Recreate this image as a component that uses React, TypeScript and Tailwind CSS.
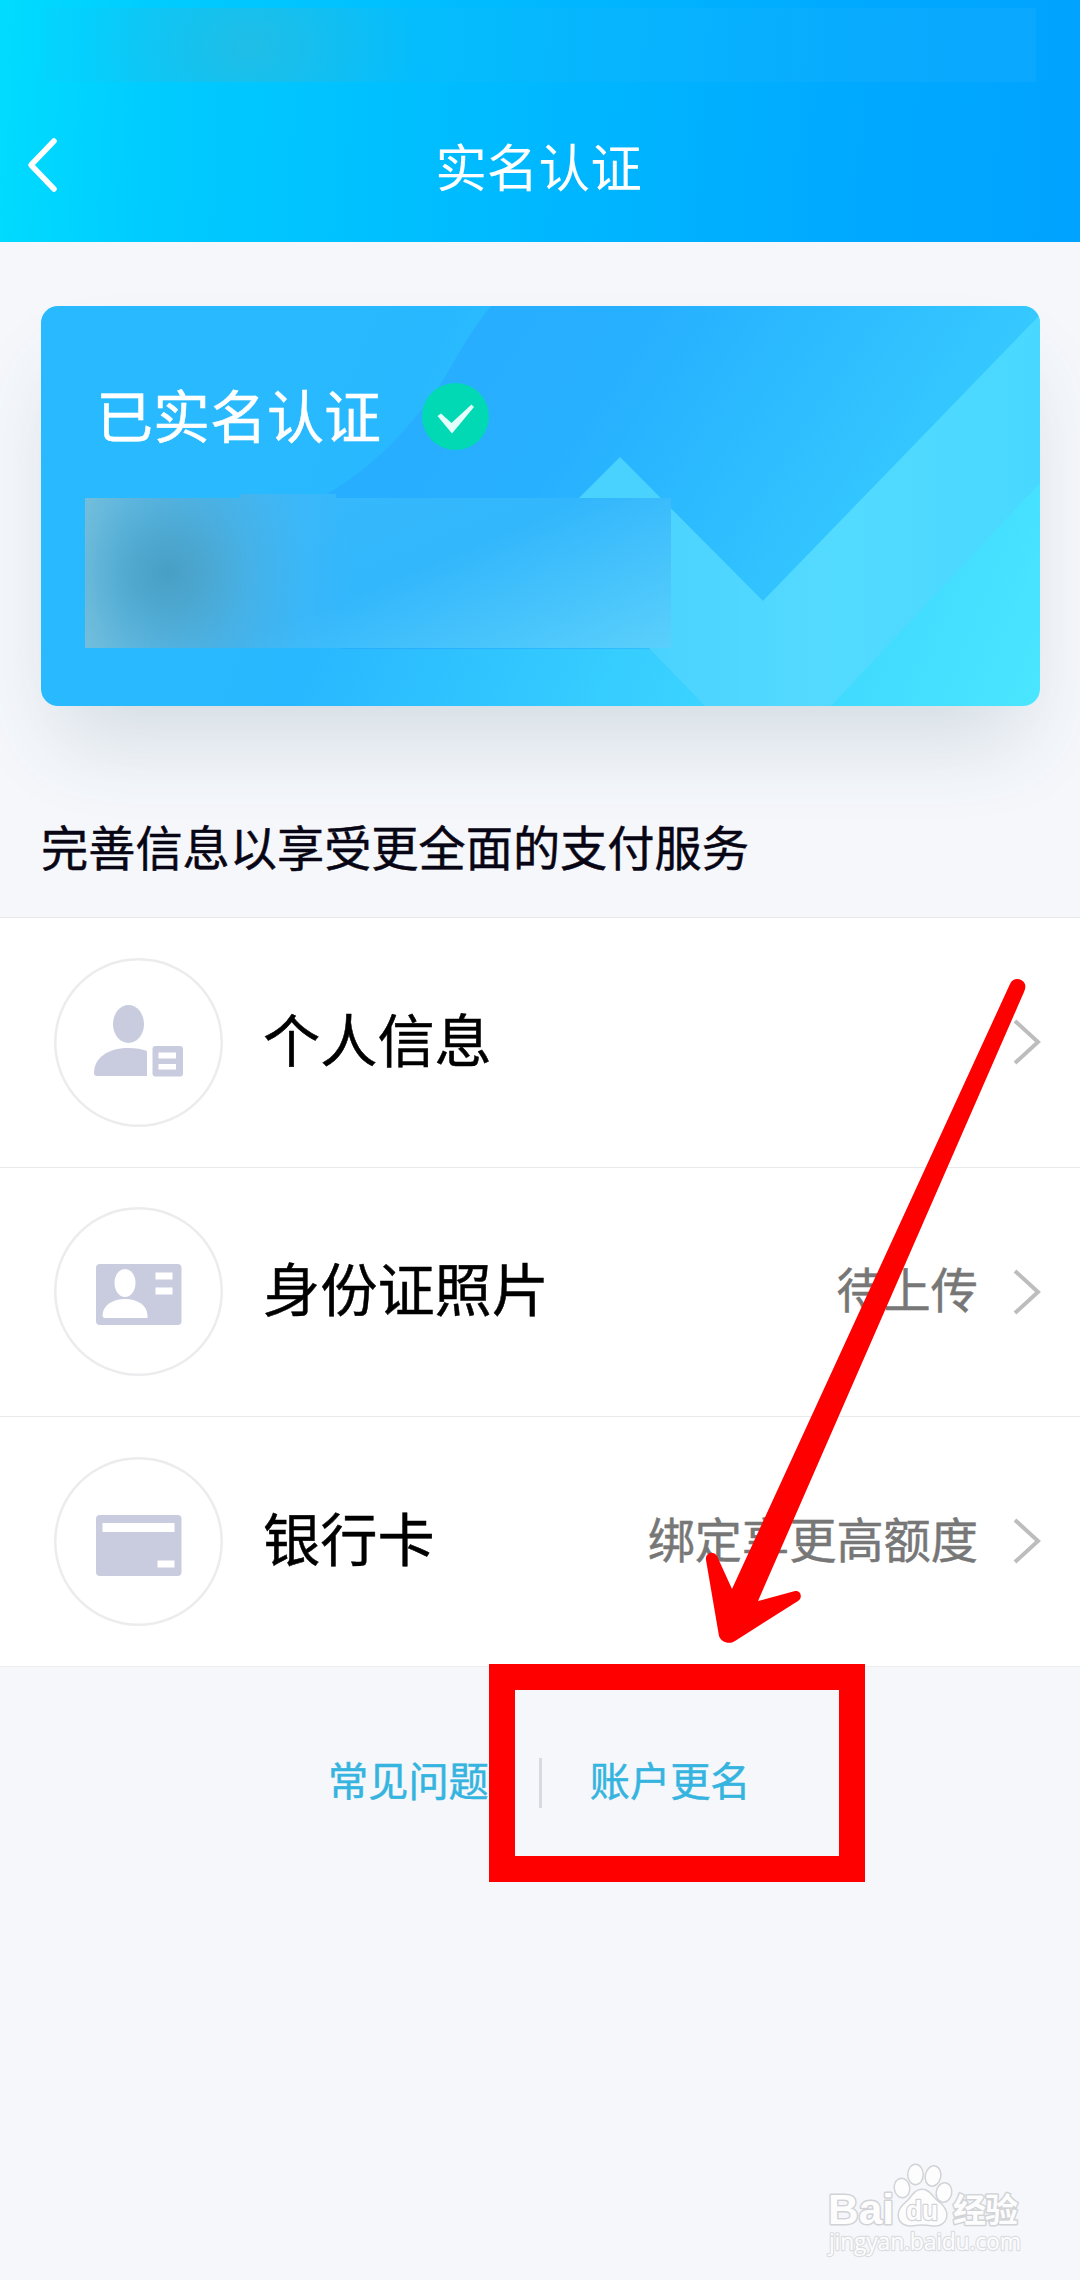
import type { ReactNode } from "react";

type RowItem = {
    label: string;
    hint?: string;
    icon: ReactNode;
};

function PersonIcon() {
    return (
        <svg viewBox="0 0 169 169" className="w-full h-full">
            <ellipse cx="74.5" cy="66" rx="15.5" ry="19" fill="#c9cbde" />
            <path
                d="M40 115 C40 100 54 90 74 90 C82 90 88 91 93 93 V118 H43 Q40 118 40 115Z"
                fill="#c9cbde"
            />
            <rect x="98.5" y="88" width="30.5" height="30.5" rx="3" fill="#c9cbde" />
            <rect x="104.5" y="94.5" width="17.5" height="6" fill="#fff" />
            <rect x="104.5" y="106" width="17.5" height="5.5" fill="#fff" />
        </svg>
    );
}

function IdCardIcon() {
    return (
        <svg viewBox="0 0 169 169" className="w-full h-full">
            <rect x="42" y="57" width="85.5" height="61" rx="4" fill="#c9cbde" />
            <ellipse cx="71" cy="76" rx="10.5" ry="14" fill="#fff" />
            <path
                d="M48.5 108 C49 98 59 92 71 92 C83 92 93 98 93.5 108 V111 H51 Q48.5 111 48.5 108Z"
                fill="#fff"
            />
            <rect x="101.5" y="65.5" width="17" height="7" fill="#fff" />
            <rect x="101.5" y="80.5" width="17" height="7" fill="#fff" />
        </svg>
    );
}

function BankCardIcon() {
    return (
        <svg viewBox="0 0 169 169" className="w-full h-full">
            <rect x="42" y="58" width="85.5" height="61" rx="4" fill="#c9cbde" />
            <rect x="48.5" y="66" width="72" height="9" fill="#fff" />
            <rect x="103.5" y="103.5" width="17" height="7" fill="#fff" />
        </svg>
    );
}

const rows: RowItem[] = [
    { label: "个人信息", icon: <PersonIcon /> },
    { label: "身份证照片", hint: "待上传", icon: <IdCardIcon /> },
    { label: "银行卡", hint: "绑定享更高额度", icon: <BankCardIcon /> },
];

function Header() {
    return (
        <header className="relative h-[242px] pt-[90px] bg-[linear-gradient(93deg,#00dcff_0%,#00ccff_14%,#00b8ff_50%,#00a9ff_80%,#00a3ff_100%)]">
            {/* smudged status bar */}
            <div className="absolute left-[45px] top-[8px] w-[991px] h-[74px] bg-[radial-gradient(ellipse_170px_130px_at_205px_38px,rgba(50,185,215,0.6),transparent),linear-gradient(90deg,rgba(40,190,240,0.1)_0%,rgba(20,185,245,0.2)_30%,rgba(40,175,255,0.25)_100%)]" />

            <div className="relative h-[152px] flex items-center justify-center">
                <svg viewBox="0 0 40 60" className="absolute left-[23px] top-[45px] w-[40px] h-[60px]">
                    <path
                        d="M31 6 L8 30 L31 54"
                        fill="none"
                        stroke="#fff"
                        strokeWidth="5.5"
                        strokeLinecap="round"
                        strokeLinejoin="round"
                    />
                </svg>
                <h1 className="pt-[8px] pr-[3px] text-[51.7px] leading-none text-white">实名认证</h1>
            </div>
        </header>
    );
}

function StatusCard() {
    return (
        <section className="relative mx-auto w-[999px] h-[400px] rounded-[17px] shadow-[0_50px_80px_-20px_rgba(60,100,120,0.19)]">
            <svg
                viewBox="0 0 999 400"
                className="absolute inset-0 w-full h-full rounded-[17px]"
                preserveAspectRatio="none"
            >
                <defs>
                    <linearGradient id="base" x1="240" y1="100" x2="999" y2="400" gradientUnits="userSpaceOnUse">
                        <stop offset="0" stopColor="#28b9ff" />
                        <stop offset="0.15" stopColor="#28b8ff" />
                        <stop offset="0.5" stopColor="#36cdff" />
                        <stop offset="1" stopColor="#4ae6ff" />
                    </linearGradient>
                    <linearGradient id="swoosh" x1="430" y1="80" x2="800" y2="330" gradientUnits="userSpaceOnUse">
                        <stop offset="0" stopColor="#28aeff" />
                        <stop offset="0.25" stopColor="#27b0ff" />
                        <stop offset="0.6" stopColor="#2dbcff" />
                        <stop offset="1" stopColor="#36caff" />
                    </linearGradient>
                    <linearGradient id="band" x1="600" y1="0" x2="999" y2="0" gradientUnits="userSpaceOnUse">
                        <stop offset="0" stopColor="#4ad2ff" />
                        <stop offset="0.45" stopColor="#54daff" />
                        <stop offset="1" stopColor="#48d8ff" />
                    </linearGradient>
                    <linearGradient id="blur" x1="290" y1="200" x2="390" y2="440" gradientUnits="userSpaceOnUse">
                        <stop offset="0" stopColor="#35b8fc" />
                        <stop offset="0.35" stopColor="#33b7fc" />
                        <stop offset="1" stopColor="#5acffb" />
                    </linearGradient>
                    <linearGradient id="edge" x1="44" y1="0" x2="310" y2="0" gradientUnits="userSpaceOnUse">
                        <stop offset="0" stopColor="#7cc2dc" />
                        <stop offset="0.5" stopColor="#52b4e4" stopOpacity="0.7" />
                        <stop offset="1" stopColor="#48b8f6" stopOpacity="0" />
                    </linearGradient>
                    <radialGradient id="smudge" cx="127" cy="267" r="145" gradientUnits="userSpaceOnUse">
                        <stop offset="0" stopColor="#489fc5" />
                        <stop offset="0.25" stopColor="#4aa3ca" stopOpacity="0.8" />
                        <stop offset="0.6" stopColor="#4aa8d4" stopOpacity="0.3" />
                        <stop offset="1" stopColor="#4aacdc" stopOpacity="0" />
                    </radialGradient>
                </defs>
                <rect width="999" height="400" fill="url(#base)" />
                <path
                    d="M450 0 C425 30 415 55 395 85 C362 128 335 160 279 192 L300 343 L610 343 L722 295 L999 9 V0Z"
                    fill="url(#swoosh)"
                />
                <path d="M579 151 L722 295 L999 9 V177 L790 400 H664 L500 230Z" fill="url(#band)" />
                {/* blurred name and id number */}
                <path d="M44 192 H199 V188 H295 V192 H630 V342 H44Z" fill="url(#blur)" />
                <path d="M44 192 H199 V188 H295 V192 H310 V342 H44Z" fill="url(#edge)" />
                <path d="M44 192 H199 V188 H295 V342 H44Z" fill="url(#smudge)" />
            </svg>

            <div className="relative flex items-center gap-[41px] pl-[55px] pt-[77px]">
                <h2 className="pt-[3px] text-[57px] leading-[64px] text-white">已实名认证</h2>
                <svg viewBox="0 0 67 67" className="w-[67px] h-[67px]">
                    <circle cx="33.5" cy="33.5" r="33.5" fill="#00d9b4" />
                    <path
                        d="M15.5 33 L19 30.5 L29.5 40 L49.5 21.5 L52 24 L30 50.5Z"
                        fill="#e4fffb"
                    />
                </svg>
            </div>
        </section>
    );
}

function Row({ item }: { item: RowItem }) {
    return (
        <li className="h-[249.6px] flex items-center pl-[54px] pr-[38px] border-t-[1.5px] border-[#e9e9eb]">
            <div className="w-[169px] h-[169px] rounded-full shadow-[inset_0_0_0_2.5px_#ececee]">
                {item.icon}
            </div>
            <span className="ml-[40px] text-[57.2px] leading-none text-black">{item.label}</span>
            <span className="ml-auto text-[47.2px] leading-none text-[#777]">{item.hint}</span>
            <svg viewBox="0 0 30 50" className="ml-[34px] w-[30px] h-[50px]">
                <path d="M3 4 L26 25 L3 46" fill="none" stroke="#bdbdbd" strokeWidth="4" />
            </svg>
        </li>
    );
}

// red arrow and frame that point at the rename link
function Annotation() {
    return (
        <>
            <svg
                viewBox="700 970 340 690"
                className="absolute left-[700px] top-[970px] w-[340px] h-[690px]"
            >
                <path
                    d="M1010 984 C1013 977 1022 978 1025 984 Q1026 988 1024 992 L758 1601 L795 1591 C801 1590 803 1598 798 1601 L735 1641 C729 1645 721 1642 719 1636 L706 1560 C705 1553 713 1550 717 1556 L732 1589Z"
                    fill="#f00"
                />
            </svg>
            <div className="absolute left-[489px] top-[1664px] w-[376px] h-[218px] border-[26px] border-[#f00]" />
        </>
    );
}

function Watermark() {
    return (
        <svg
            viewBox="0 0 210 110"
            className="absolute left-[820px] top-[2155px] w-[210px] h-[110px] [paint-order:stroke]"
            fill="#fdfdfe"
            stroke="#d2d3d6"
            strokeWidth="3"
            strokeLinejoin="round"
        >
            <text x="8" y="69" fontSize="43" fontWeight="700" textLength="66" lengthAdjust="spacingAndGlyphs">
                Bai
            </text>
            <ellipse cx="82" cy="33" rx="7" ry="9" transform="rotate(-10 82 33)" />
            <ellipse cx="95.5" cy="19.5" rx="7" ry="9.5" />
            <ellipse cx="113" cy="21" rx="7" ry="9.5" transform="rotate(12 113 21)" />
            <ellipse cx="124" cy="37.5" rx="7" ry="9" transform="rotate(12 124 37.5)" />
            <path d="M102 35 C109 35 112 42 118 47 C124 51 127 57 126 62 C124 70 117 71 111 70 C105 69 99 69 93 70 C86 71 79 68 79 60 C79 53 84 50 89 45 C93 40 96 35 102 35Z" />
            <text x="86" y="65" fontSize="27" fontWeight="700" strokeWidth="2.4" textLength="32" lengthAdjust="spacingAndGlyphs">
                du
            </text>
            <text x="133" y="67" fontSize="33" fontWeight="700" textLength="65">
                经验
            </text>
            <text
                x="9"
                y="95"
                fontSize="23"
                strokeWidth="2.4"
                stroke="#dcdde1"
                textLength="192"
                className="font-['Open_Sans',sans-serif]"
            >
                jingyan.baidu.com
            </text>
        </svg>
    );
}

export default function App() {
    return (
        <div className="relative w-[1080px] h-[2280px] overflow-hidden bg-[#f5f7fb] font-['Liberation_Sans','Noto_Sans_CJK_SC',sans-serif]">
            <Header />

            <main className="[-webkit-text-stroke:0.5px]">
                <div className="pt-[64px] pl-px">
                    <StatusCard />
                </div>

                <p className="mt-[119px] mb-[42px] pl-[41px] text-[47.2px] leading-[50px] text-[#080615]">
                    完善信息以享受更全面的支付服务
                </p>

                <ul className="bg-white border-b border-[#eeeef0]">
                    {rows.map((item) => (
                        <Row key={item.label} item={item} />
                    ))}
                </ul>

                <nav className="mt-[91px] pl-[328px] flex items-center text-[40.2px] leading-[50px] text-[#35b4e0]">
                    <a>常见问题</a>
                    <span className="ml-[50px] mr-[48px] w-[3px] h-[50px] bg-[#d9dadf]" />
                    <a>账户更名</a>
                </nav>
            </main>

            <Annotation />
            <Watermark />
        </div>
    );
}
